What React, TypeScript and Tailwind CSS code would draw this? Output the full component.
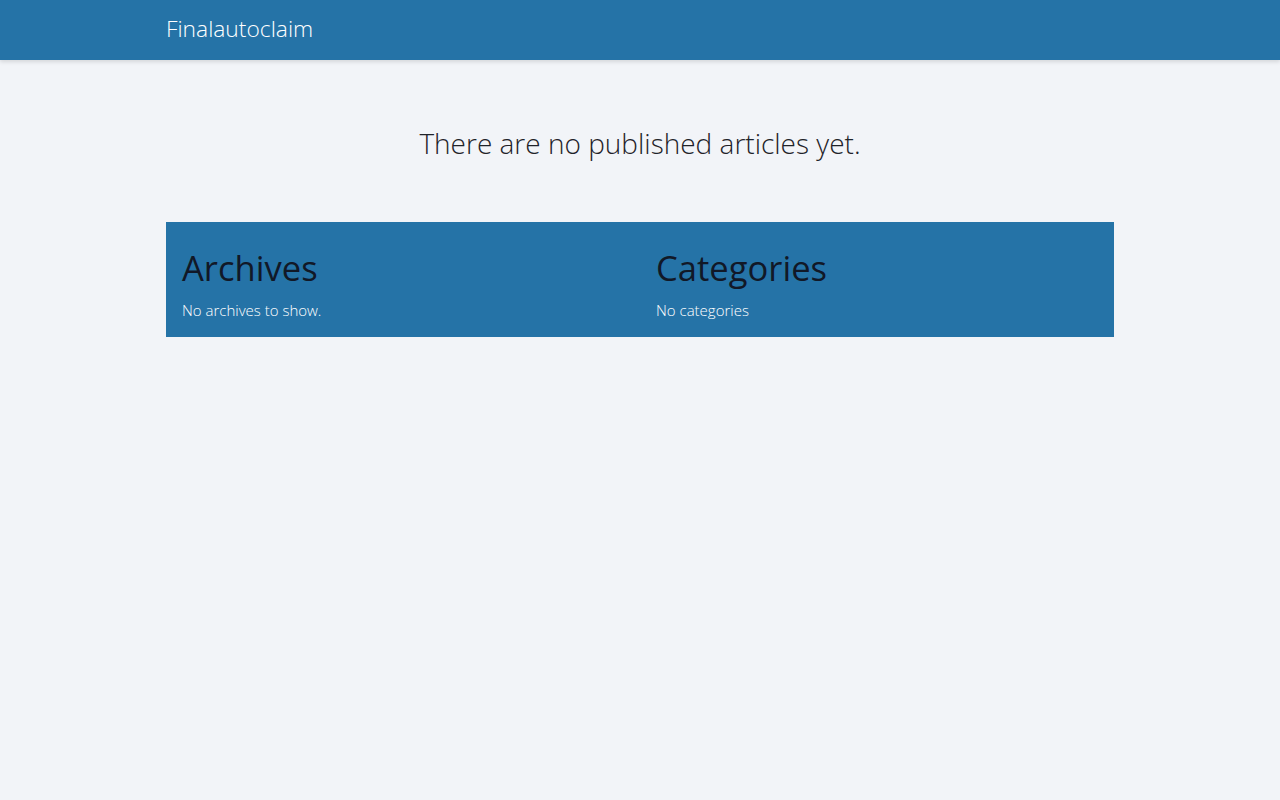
import React from "react";

export default function App() {
  return (
    <div className="min-h-screen bg-[#f2f4f8] font-['Open_Sans',sans-serif]">
      <header className="h-[60px] bg-[#2573a7] shadow-[0_2px_4px_rgba(0,0,0,0.12)]">
        <div className="mx-auto flex h-full w-[948px] items-center pb-[2px]">
          <span className="text-[22.8px] leading-[30px] font-light text-white">Finalautoclaim</span>
        </div>
      </header>
      <main className="mx-auto w-[948px]">
        <p className="pt-[63px] text-center text-[28px] font-light leading-[40px] text-[#1f2329]">
          There are no published articles yet.
        </p>
        <section className="mt-[59px] grid grid-cols-2 bg-[#2573a7] pt-[24px] pb-[17px]">
          <div className="px-4">
            <h2 className="text-[34.6px] leading-[44px] text-[#111827] font-normal">Archives</h2>
            <p className="mt-[10px] text-[15px] leading-[20px] font-light text-white">No archives to show.</p>
          </div>
          <div className="px-4">
            <h2 className="text-[34.6px] leading-[44px] text-[#111827] font-normal">Categories</h2>
            <p className="mt-[10px] text-[15px] leading-[20px] font-light text-white">No categories</p>
          </div>
        </section>
      </main>
    </div>
  );
}
